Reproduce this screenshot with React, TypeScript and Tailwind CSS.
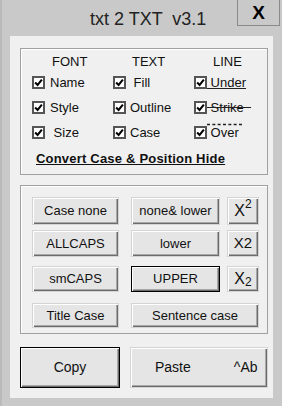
import React from "react";

const F = "font-['Liberation_Sans',Arial,sans-serif]";

const Box = () => (
  <span className="w-[13px] h-[13px] border-2 border-[#555] bg-white flex items-center justify-center shrink-0">
    <svg width="9" height="9" viewBox="0 0 8 8">
      <path d="M1 4 L3.2 6.2 L7 1.5" stroke="#000" strokeWidth="1.8" fill="none" />
    </svg>
  </span>
);

const Row = ({ children, gap }: { children: React.ReactNode; gap: string }) => (
  <div className="h-[25px] flex items-center">
    <Box />
    <span className={`${gap} text-[13px] leading-[15px] text-[#111] whitespace-pre`}>{children}</span>
  </div>
);

const btn =
  "bg-[#e5e5e5] flex items-center justify-center text-[13px] text-[#111] shadow-[inset_1px_1px_0_#ffffff,inset_-1px_-1px_0_#6b6b6b,inset_-2px_-2px_0_#a8a8a8] border border-[#d4d4d4]";
const defBtn =
  "bg-[#e5e5e5] flex items-center justify-center text-[13px] text-[#111] border border-black shadow-[inset_1px_1px_0_#ffffff,inset_-1px_-1px_0_#6b6b6b,inset_-2px_-2px_0_#a8a8a8]";

export default function App() {
  return (
    <div className={`w-[282px] h-[406px] bg-[#c9c9c9] border-l-2 border-[#bababa] flex flex-col overflow-hidden ${F}`}>
      {/* title bar */}
      <div className="h-[36px] flex shrink-0">
        <div className="w-[88px]" />
        <div className="pt-[8px] text-[18px] leading-[22px] text-[#222] whitespace-pre">txt 2 TXT  v3.1</div>
        <div className="flex-1" />
        <div className="w-[43px] h-[26px] mr-[2px] border border-t-0 border-[#8a8a8a] flex items-center justify-center text-[19px] font-black leading-none text-black">
          X
        </div>
      </div>

      {/* panel */}
      <div className="ml-[8px] w-[263px] h-[362px] bg-[#f0f0f0] pl-[10px] pt-[12px] flex flex-col">
        {/* group 1 */}
        <div className="w-[248px] h-[127px] border border-[#a0a0a0] shadow-[inset_1px_1px_0_#ffffff] pl-[11px] pt-[6px] flex flex-col">
          <div className="flex">
            <div className="w-[81px] flex flex-col">
              <div className="h-[14px] pl-[20px] text-[13px] leading-[14px] text-[#111]">FONT</div>
              <div className="mt-[1px]">
                <Row gap="ml-[5px]">Name</Row>
                <Row gap="ml-[5px]">Style</Row>
                <Row gap="ml-[5px]"> Size</Row>
              </div>
            </div>
            <div className="w-[81px] flex flex-col">
              <div className="h-[14px] pl-[19px] text-[13px] leading-[14px] text-[#111]">TEXT</div>
              <div className="mt-[1px]">
                <Row gap="ml-[4px]"> Fill</Row>
                <Row gap="ml-[4px]">Outline</Row>
                <Row gap="ml-[4px]">Case</Row>
              </div>
            </div>
            <div className="w-[70px] flex flex-col">
              <div className="h-[14px] pl-[19px] text-[13px] leading-[14px] text-[#111]">LINE</div>
              <div className="mt-[1px]">
                <Row gap="ml-[0px]">
                  <span className="underline decoration-[#222]"> Under</span>
                </Row>
                <Row gap="ml-[0px]">
                  <span className="line-through decoration-[#222]"> Strike  </span>
                </Row>
                <Row gap="ml-[0px]">
                  <span className="overline decoration-dashed decoration-[#222]"> Over </span>
                </Row>
              </div>
            </div>
          </div>
          <div className="mt-[6px] ml-[4px] h-[16px] text-[13px] leading-[16px] font-bold underline tracking-[0.2px] text-[#111]">
            Convert Case &amp; Position Hide
          </div>
        </div>

        {/* group 2 */}
        <div className="mt-[10px] w-[248px] h-[149px] border border-[#a0a0a0] shadow-[inset_1px_1px_0_#ffffff] pl-[11px] pt-[11px] flex flex-col">
          <div className="h-[28px] flex">
            <div className={`${btn} w-[87px]`}>Case none</div>
            <div className={`${btn} w-[89px] ml-[12px]`}>none&amp; lower</div>
            <div className={`${btn} w-[32px] ml-[7px] text-[16px]`}>
              X<sup className="text-[12px] -mt-[2px]">2</sup>
            </div>
          </div>
          <div className="h-[27px] mt-[5px] flex">
            <div className={`${btn} w-[87px]`}>ALLCAPS</div>
            <div className={`${btn} w-[89px] ml-[12px]`}>lower</div>
            <div className={`${btn} w-[32px] ml-[7px] text-[15px]`}>X2</div>
          </div>
          <div className="h-[26px] mt-[9px] flex">
            <div className={`${btn} w-[87px] text-[10px]`}>smCAPS</div>
            <div className={`${defBtn} w-[89px] ml-[12px]`}>UPPER</div>
            <div className={`${btn} w-[32px] ml-[7px] text-[16px]`}>
              X<sub className="text-[12px]">2</sub>
            </div>
          </div>
          <div className="h-[25px] mt-[11px] flex">
            <div className={`${btn} w-[87px]`}>Title Case</div>
            <div className={`${btn} w-[128px] ml-[12px]`}>Sentence case</div>
          </div>
        </div>

        {/* bottom buttons */}
        <div className="mt-[13px] h-[41px] flex">
          <div className={`${defBtn} w-[100px] text-[14px]`}>Copy</div>
          <div className={`${btn} w-[138px] ml-[10px] text-[14px] justify-start`}>
            <span className="ml-[24px]">Paste</span>
            <span className="ml-[43px]">^Ab</span>
          </div>
        </div>
      </div>
    </div>
  );
}
